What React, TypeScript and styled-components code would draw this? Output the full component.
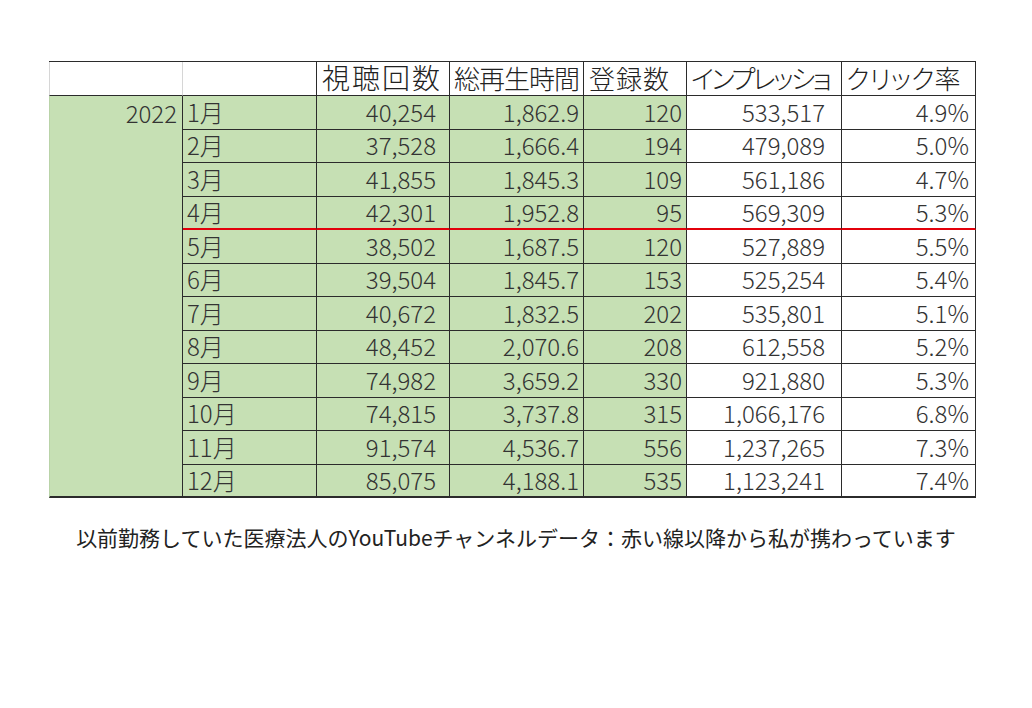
import React from "react";
import styled, { createGlobalStyle, css } from "styled-components";

const GlobalStyle = createGlobalStyle`
  html, body {
    margin: 0;
    padding: 0;
    background: #ffffff;
  }
  body {
    font-family: "Noto Sans CJK JP", "Noto Sans", sans-serif;
    color: #262626;
  }
`;

const GREEN = "#c6e0b4";
const LINE = "#2b2b2b";

const Page = styled.div`
  width: 1032px;
  height: 708px;
  box-sizing: border-box;
  padding-top: 61px;
  display: flex;
  flex-direction: column;
`;

const SheetWrap = styled.div`
  padding-left: 49px;
`;

const Sheet = styled.div`
  display: grid;
  grid-template-columns: 134px 134px 133px 134px 103px 155px 134px;
  grid-template-rows: 34px repeat(12, 33.5px);
  width: 927px;
  border-top: 1px solid ${LINE};
`;

type CellProps = {
  $green?: boolean;
  $right?: boolean;
  $padR?: number;
  $red?: boolean;
  $last?: boolean;
  $faintRight?: boolean;
};

const Cell = styled.div<CellProps>`
  box-sizing: border-box;
  min-width: 0;
  display: flex;
  align-items: center;
  justify-content: ${(p) => (p.$right ? "flex-end" : "flex-start")};
  padding: 0 ${(p) => p.$padR ?? 4}px 0 4px;
  background: ${(p) => (p.$green ? GREEN : "#ffffff")};
  border-right: 1px solid ${(p) => (p.$faintRight ? "#d6d6d6" : LINE)};
  border-bottom: 1px solid ${LINE};
  ${(p) =>
    p.$red &&
    css`
      border-bottom: 2px solid #e3000b;
    `}
  ${(p) =>
    p.$last &&
    css`
      border-bottom: 2px solid ${LINE};
    `}
  white-space: nowrap;
  font-size: 24px;
  font-weight: 300;
  line-height: 1.2;
  color: #333333;
`;

const HeadCell = styled(Cell)<{ $spacing?: number; $padL?: number; $size?: number }>`
  font-size: ${(p) => p.$size ?? 26}px;
  padding-left: ${(p) => p.$padL ?? 5}px;
  padding-right: 0;
  padding-bottom: 1px;
  font-feature-settings: "palt";
  letter-spacing: ${(p) => p.$spacing ?? 0}px;
  color: #222222;
`;

const CornerCell = styled(HeadCell)`
  border-left: 1px solid #d6d6d6;
`;

const YearCell = styled(Cell)`
  grid-column: 1;
  grid-row: 2 / span 12;
  align-items: flex-start;
  padding-top: 3px;
  padding-right: 5px;
  border-left: 1px solid #b9d3a8;
  border-bottom: 2px solid ${LINE};
`;

const Caption = styled.p`
  margin: 24px 0 0;
  text-align: center;
  font-size: 21px;
  line-height: 31px;
  color: #222222;
  font-family: "Noto Sans CJK JP", "Noto Sans", sans-serif;
`;

type Row = {
  month: string;
  views: string;
  hours: string;
  subs: string;
  imp: string;
  ctr: string;
};

const rows: Row[] = [
  { month: "1月", views: "40,254", hours: "1,862.9", subs: "120", imp: "533,517", ctr: "4.9%" },
  { month: "2月", views: "37,528", hours: "1,666.4", subs: "194", imp: "479,089", ctr: "5.0%" },
  { month: "3月", views: "41,855", hours: "1,845.3", subs: "109", imp: "561,186", ctr: "4.7%" },
  { month: "4月", views: "42,301", hours: "1,952.8", subs: "95", imp: "569,309", ctr: "5.3%" },
  { month: "5月", views: "38,502", hours: "1,687.5", subs: "120", imp: "527,889", ctr: "5.5%" },
  { month: "6月", views: "39,504", hours: "1,845.7", subs: "153", imp: "525,254", ctr: "5.4%" },
  { month: "7月", views: "40,672", hours: "1,832.5", subs: "202", imp: "535,801", ctr: "5.1%" },
  { month: "8月", views: "48,452", hours: "2,070.6", subs: "208", imp: "612,558", ctr: "5.2%" },
  { month: "9月", views: "74,982", hours: "3,659.2", subs: "330", imp: "921,880", ctr: "5.3%" },
  { month: "10月", views: "74,815", hours: "3,737.8", subs: "315", imp: "1,066,176", ctr: "6.8%" },
  { month: "11月", views: "91,574", hours: "4,536.7", subs: "556", imp: "1,237,265", ctr: "7.3%" },
  { month: "12月", views: "85,075", hours: "4,188.1", subs: "535", imp: "1,123,241", ctr: "7.4%" },
];

export default function App() {
  return (
    <>
      <GlobalStyle />
      <Page>
        <SheetWrap>
          <Sheet>
            <CornerCell $faintRight />
            <HeadCell />
            <HeadCell $size={28} $spacing={2}>視聴回数</HeadCell>
            <HeadCell $spacing={-1} $padL={4}>総再生時間</HeadCell>
            <HeadCell $spacing={1}>登録数</HeadCell>
            <HeadCell $spacing={-2.5} $padL={4}>インプレッショ</HeadCell>
            <HeadCell $padL={4}>クリック率</HeadCell>

            <YearCell $green $right>
              2022
            </YearCell>

            {rows.map((r, i) => {
              const red = i === 3;
              const last = i === rows.length - 1;
              return (
                <React.Fragment key={r.month}>
                  <Cell $green $red={red} $last={last}>
                    {r.month}
                  </Cell>
                  <Cell $green $right $padR={13} $red={red} $last={last}>
                    {r.views}
                  </Cell>
                  <Cell $green $right $padR={4} $red={red} $last={last}>
                    {r.hours}
                  </Cell>
                  <Cell $green $right $padR={4} $red={red} $last={last}>
                    {r.subs}
                  </Cell>
                  <Cell $right $padR={16} $red={red} $last={last}>
                    {r.imp}
                  </Cell>
                  <Cell $right $padR={6} $red={red} $last={last}>
                    {r.ctr}
                  </Cell>
                </React.Fragment>
              );
            })}
          </Sheet>
        </SheetWrap>
        <Caption>
          以前勤務していた医療法人のYouTubeチャンネルデータ：赤い線以降から私が携わっています
        </Caption>
      </Page>
    </>
  );
}
